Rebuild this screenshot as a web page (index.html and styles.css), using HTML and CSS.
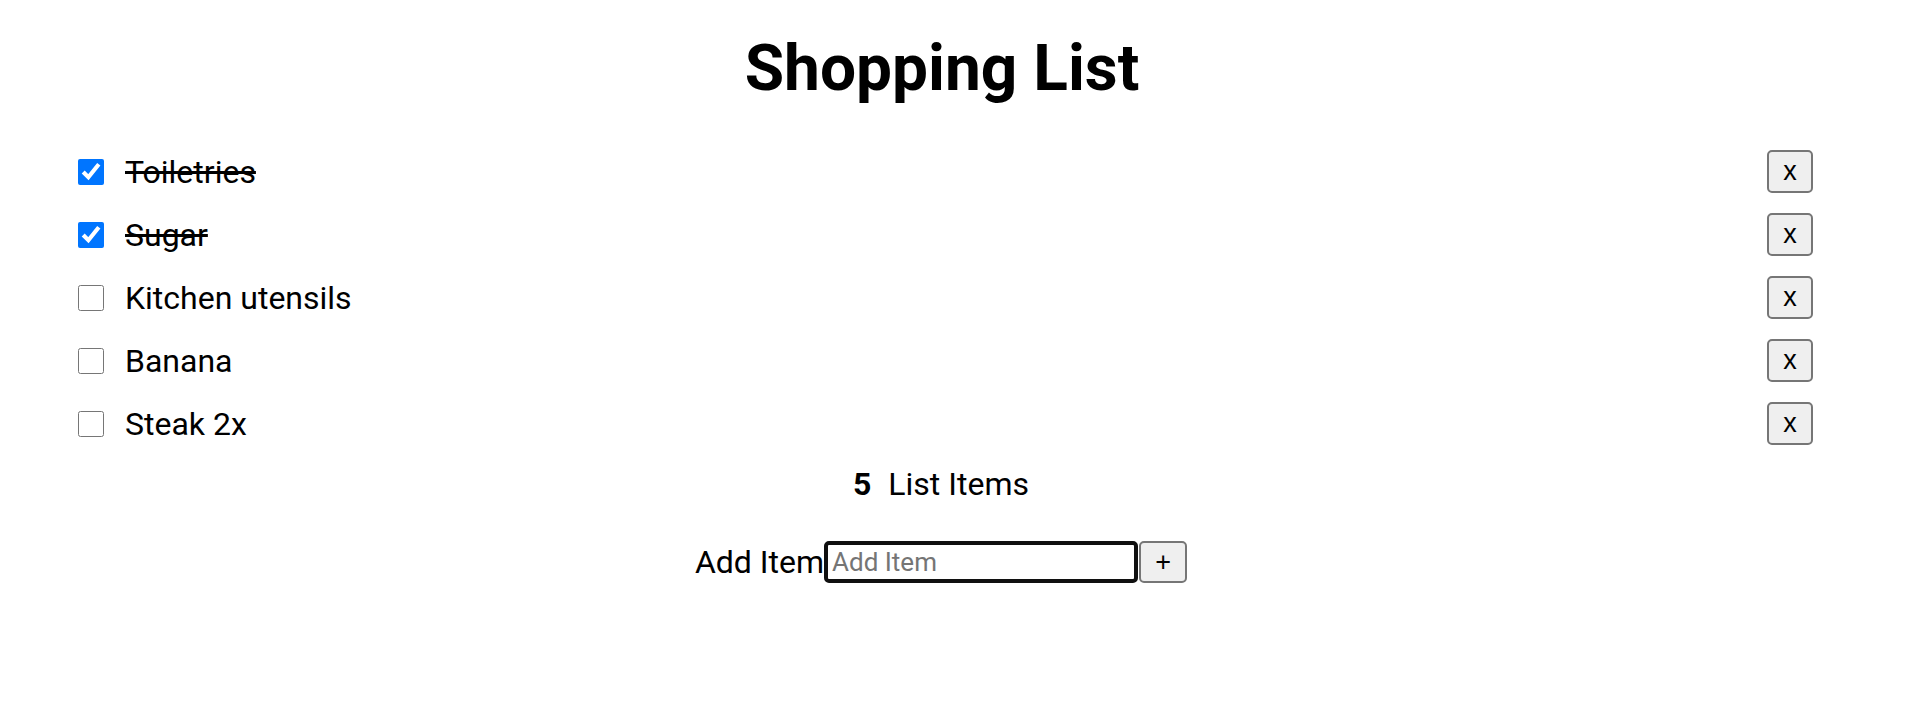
FILE: index.html
```html
<!DOCTYPE html>
<html lang="en">
<head>
<meta charset="utf-8">
<title>Shopping List</title>
<link rel="stylesheet" href="styles.css">
</head>
<body>
<main class="app">
  <h1 class="title">Shopping List</h1>
  <ul class="list">
    <li class="item">
      <input type="checkbox" class="check" checked>
      <span class="label done">Toiletries</span>
      <button class="remove">x</button>
    </li>
    <li class="item">
      <input type="checkbox" class="check" checked>
      <span class="label done">Sugar</span>
      <button class="remove">x</button>
    </li>
    <li class="item">
      <input type="checkbox" class="check">
      <span class="label">Kitchen utensils</span>
      <button class="remove">x</button>
    </li>
    <li class="item">
      <input type="checkbox" class="check">
      <span class="label">Banana</span>
      <button class="remove">x</button>
    </li>
    <li class="item">
      <input type="checkbox" class="check">
      <span class="label">Steak 2x</span>
      <button class="remove">x</button>
    </li>
  </ul>
  <p class="count"><strong class="num">5</strong> List Items</p>
  <form class="add">
    <label class="add-label" for="newItem">Add Item</label>
    <input id="newItem" class="add-input" type="text" placeholder="Add Item">
    <button type="button" class="add-btn">+</button>
  </form>
</main>
</body>
</html>
```

FILE: styles.css
```css
* { box-sizing: border-box; }

html, body {
  margin: 0;
  padding: 0;
  background: #ffffff;
}

body {
  font-family: Roboto, "Liberation Sans", Arial, sans-serif;
  color: #000;
}

.app {
  display: flex;
  flex-direction: column;
}

.title {
  margin: 31px 0 0 0;
  padding-right: 22px;
  font-size: 64px;
  font-weight: 700;
  line-height: 75px;
  text-align: center;
}

.list {
  list-style: none;
  margin: 34px 93px 0 78px;
  padding: 0;
}

.item {
  display: flex;
  align-items: center;
  height: 63px;
}

.check {
  margin: 0;
  width: 26px;
  height: 26px;
  accent-color: #0075ff;
  flex: none;
}

.label {
  margin-left: 21px;
  font-size: 32px;
  flex: 1;
}

.done {
  text-decoration: line-through;
}

.remove {
  flex: none;
  width: 46px;
  height: 43px;
  padding: 0;
  background: #efefef;
  border: 2px solid #767676;
  border-radius: 5px;
  font-family: "Liberation Sans", Arial, sans-serif;
  font-size: 27px;
  color: #000;
  line-height: 1;
}

.count {
  margin: 9px 0 0 0;
  padding-right: 24px;
  text-align: center;
  font-size: 32px;
  line-height: 40px;
}

.num {
  font-weight: 700;
  margin-right: 9px;
}

.add {
  margin: 37px 0 0 0;
  padding-right: 24px;
  display: flex;
  justify-content: center;
  align-items: center;
}

.add-label {
  font-size: 32px;
}

.add-input {
  width: 314px;
  height: 42px;
  margin: 0 1px 0 0;
  padding: 0 4px;
  border: 4px solid #101010;
  border-radius: 5px;
  font-family: Roboto, "Liberation Sans", Arial, sans-serif;
  font-size: 26px;
  color: #000;
  outline: none;
}

.add-input::placeholder {
  color: #757575;
}

.add-btn {
  width: 48px;
  height: 42px;
  padding: 0;
  background: #efefef;
  border: 2px solid #767676;
  border-radius: 5px;
  font-family: "Liberation Sans", Arial, sans-serif;
  font-size: 27px;
  color: #000;
  line-height: 1;
}
```
